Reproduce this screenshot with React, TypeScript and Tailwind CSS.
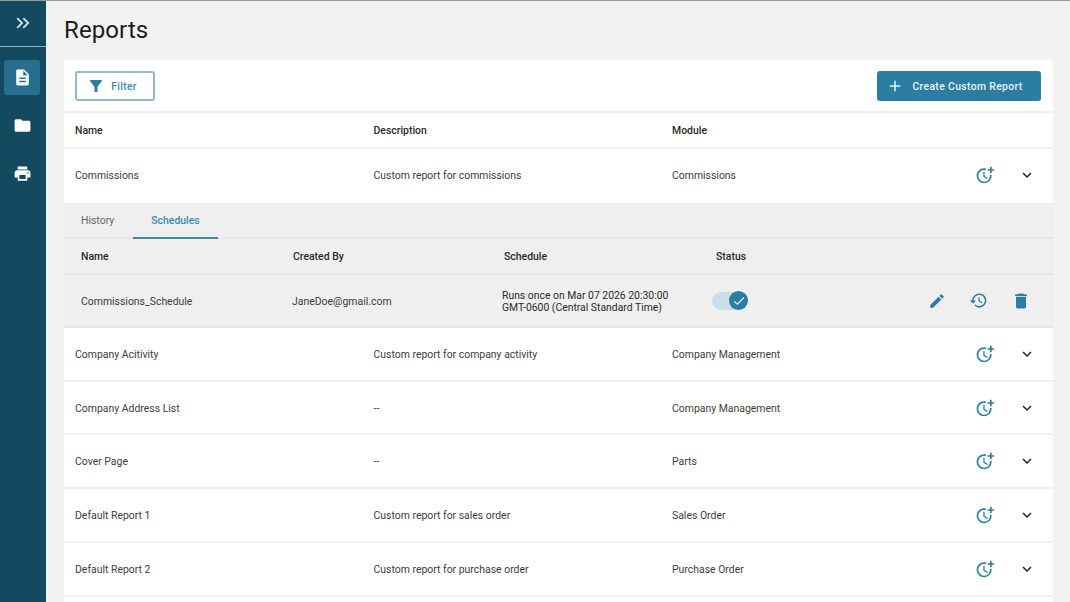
import React from "react";
import {
  MdAdd,
  MdCheck,
  MdDelete,
  MdDescription,
  MdEdit,
  MdFilterAlt,
  MdFolder,
  MdHistory,
  MdKeyboardArrowDown,
  MdKeyboardDoubleArrowRight,
  MdMoreTime,
  MdPrint,
} from "react-icons/md";

const reports = [
  { name: "Company Acitivity", description: "Custom report for company activity", module: "Company Management", height: "h-[54px]" },
  { name: "Company Address List", description: "--", module: "Company Management", height: "h-[53px]" },
  { name: "Cover Page", description: "--", module: "Parts", height: "h-[54px]" },
  { name: "Default Report 1", description: "Custom report for sales order", module: "Sales Order", height: "h-[54px]" },
  { name: "Default Report 2", description: "Custom report for purchase order", module: "Purchase Order", height: "h-[54px]" },
];

function RowActions() {
  return (
    <>
      <MdMoreTime size={20} className="ml-[3px] -translate-y-[1px] text-[#2b7da1]" />
      <MdKeyboardArrowDown size={18} className="ml-[23px] -translate-y-[1px] text-[#222]" />
    </>
  );
}

function ReportRow({ name, description, module, height }: { name: string; description: string; module: string; height: string }) {
  return (
    <div className={`flex items-center border-b-2 border-[#efefef] pl-[11px] pt-[2px] text-[10.45px] text-[#3d3d3d] ${height}`}>
      <div className="w-[298.5px]">{name}</div>
      <div className="w-[298.5px]">{description}</div>
      <div className="w-[300px]">{module}</div>
      <RowActions />
    </div>
  );
}

export default function App() {
  return (
    <div className="flex h-[602px] w-[1070px] flex-col overflow-hidden bg-[#f2f2f2] font-['Roboto',sans-serif]">
      <div className="h-[1px] shrink-0 bg-[#9a9a9a]" />
      <div className="flex min-h-0 flex-1">
        {/* Sidebar */}
        <div className="w-[46px] shrink-0 bg-[#134a60]">
          <div className="flex h-[46px] items-center justify-center border-b border-[#8fb0bf] pb-[1px] pr-[1px] text-[#cfe3ec]">
            <MdKeyboardDoubleArrowRight size={22} />
          </div>
          <div className="mt-[13px] flex flex-col items-center pr-[2px]">
            <div className="flex h-[35px] w-[36px] items-center justify-center rounded-[3px] bg-[#286f8e] text-[#f4f7f8]">
              <MdDescription size={19} />
            </div>
            <div className="mt-[13px] flex h-[35px] items-center justify-center text-white">
              <MdFolder size={19} />
            </div>
            <div className="mt-[13px] flex h-[35px] items-center justify-center text-white">
              <MdPrint size={19} />
            </div>
          </div>
        </div>

        {/* Main */}
        <div className="min-w-0 flex-1 pl-[18px] pr-[17px]">
          <div className="flex h-[59px] items-center pb-[2px] text-[24px] tracking-[0.1px] text-[#1c1c1c]">Reports</div>
          <div className="bg-white">
            <div className="flex h-[53px] items-center justify-between border-b-2 border-[#efefef] pl-[11px] pr-[12px]">
              <button className="mt-[1px] flex h-[30px] w-[80px] items-center justify-center gap-[6px] rounded-[3px] border-2 border-[#8fbace] pr-[6px] text-[10.4px] font-medium tracking-[0.3px] text-[#3f8bab]">
                <MdFilterAlt size={18} className="text-[#2b7da1]" />
                <span className="pt-[2px]">Filter</span>
              </button>
              <button className="flex h-[30px] w-[164px] items-center justify-center gap-[8px] rounded-[3px] bg-[#2b7da1] pr-[9px] text-[10.4px] font-medium tracking-[0.35px] text-[#e9f2f6]">
                <MdAdd size={18} />
                <span className="pt-[2px]">Create Custom Report</span>
              </button>
            </div>

            <div className="flex h-[36px] items-center border-b-2 border-[#efefef] pl-[11px] pt-[2px] text-[10.45px] font-medium text-[#2a2a2a]">
              <div className="w-[298.5px]">Name</div>
              <div className="w-[298.5px]">Description</div>
              <div>Module</div>
            </div>

            <div className="flex h-[54px] items-center pl-[11px] text-[10.45px] text-[#3d3d3d]">
              <div className="w-[298.5px]">Commissions</div>
              <div className="w-[298.5px]">Custom report for commissions</div>
              <div className="w-[300px]">Commissions</div>
              <RowActions />
            </div>

            {/* Expanded row */}
            <div className="bg-[#efefef]">
              <div className="flex h-[36px] border-b-2 border-[#e6e6e6] pt-[2px] text-[10.45px]">
                <div className="flex w-[69px] items-center pl-[17px] text-[#666]">History</div>
                <div className="-mb-[2px] flex w-[85px] items-center justify-center border-b-2 border-[#3f8bab] font-medium text-[#3f8bab]">Schedules</div>
              </div>
              <div className="flex h-[36px] items-center border-b-2 border-[#e6e6e6] pl-[17px] pt-[2px] text-[10.45px] font-medium text-[#2a2a2a]">
                <div className="w-[212px]">Name</div>
                <div className="w-[211px]">Created By</div>
                <div className="w-[212px]">Schedule</div>
                <div>Status</div>
              </div>
              <div className="flex h-[53px] items-center border-b-2 border-[#e6e6e6] pl-[17px] text-[10.45px] text-[#3d3d3d]">
                <div className="w-[211px] pt-[2px]">Commissions_Schedule</div>
                <div className="w-[210px] pt-[2px]">JaneDoe@gmail.com</div>
                <div className="w-[210px] pt-[2px] text-[10.4px] leading-[12px] text-[#2a2a2a]">
                  <div>Runs once on Mar 07 2026 20:30:00</div>
                  <div>GMT-0600 (Central Standard Time)</div>
                </div>
                <div className="relative h-[18px] w-[36px] rounded-full bg-[#c8dfe9]">
                  <div className="absolute -top-[0.5px] right-0 flex h-[19px] w-[19px] items-center justify-center rounded-full bg-[#2b7da1] text-white">
                    <MdCheck size={14} />
                  </div>
                </div>
                <MdEdit size={18} className="ml-[180px] text-[#2b7da1]" />
                <MdHistory size={19} className="ml-[23px] text-[#2b7da1]" />
                <MdDelete size={20} className="ml-[23px] text-[#2b7da1]" />
              </div>
            </div>

            {reports.map((report) => (
              <ReportRow key={report.name} {...report} />
            ))}
            <div className="h-[10px]" />
          </div>
        </div>
      </div>
    </div>
  );
}
